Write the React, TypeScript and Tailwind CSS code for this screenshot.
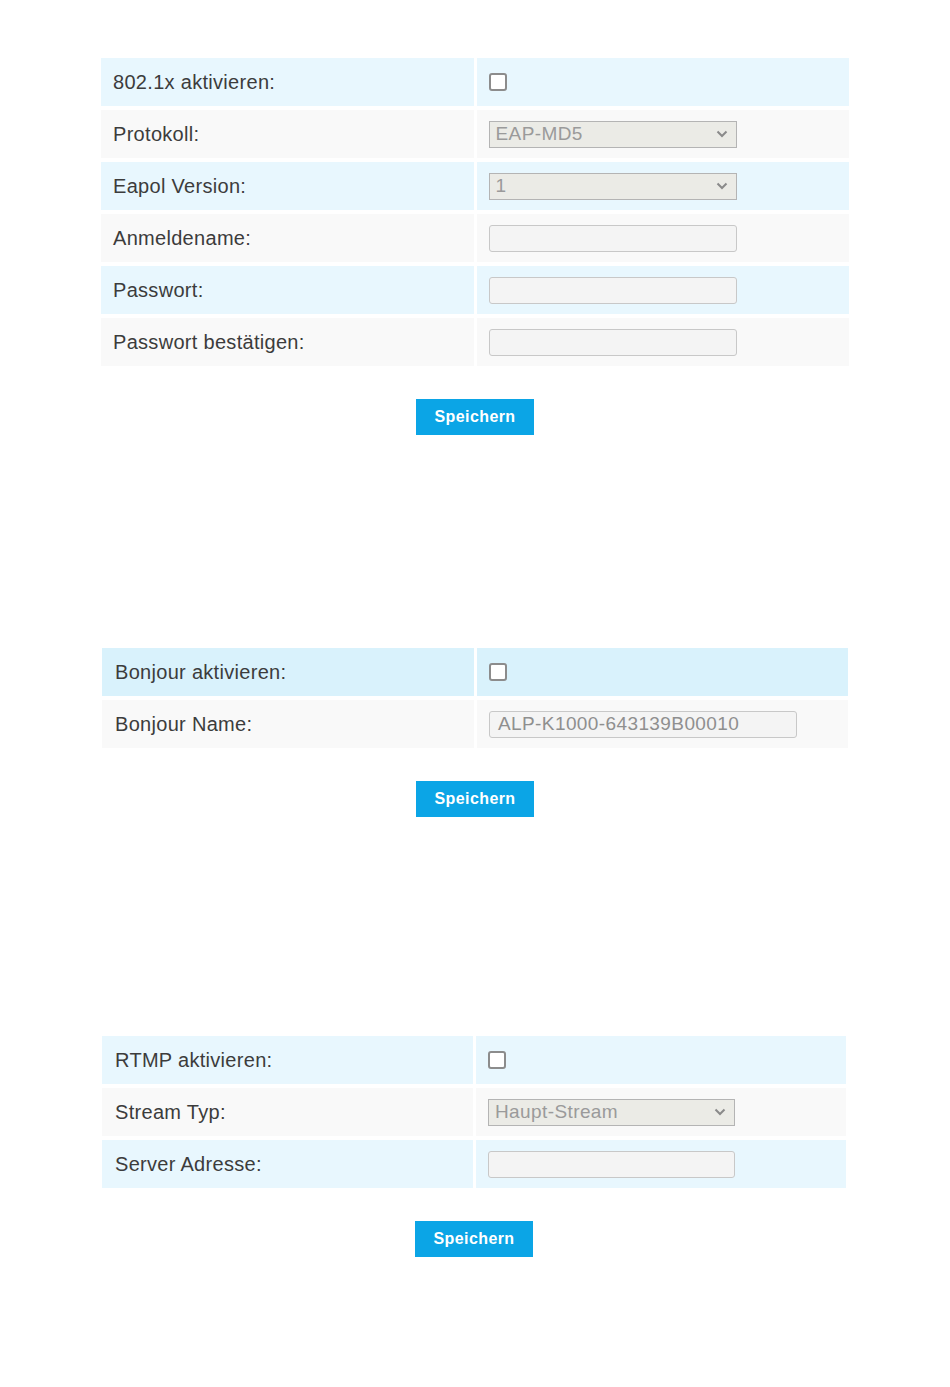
import React from "react";

type Field =
  | { kind: "check" }
  | { kind: "select"; value: string; width: number }
  | { kind: "input"; value?: string; width: number };

type Row = { label: string; field: Field };

const font = { fontFamily: '"Liberation Sans", Arial, sans-serif' };

function Chevron() {
  return (
    <svg width="12" height="8" viewBox="0 0 12 8" className="shrink-0">
      <path d="M1.5 1.5 L6 6 L10.5 1.5" fill="none" stroke="#8a8a8a" strokeWidth="2" />
    </svg>
  );
}

function FieldView({ field }: { field: Field }) {
  if (field.kind === "check") {
    return <div className="w-[18px] h-[18px] rounded-[3px] border-2 border-[#8c8c8c] bg-white" />;
  }
  if (field.kind === "select") {
    return (
      <div
        className="h-[27px] flex items-center justify-between pl-[6px] pr-[8px] border border-[#b4b4b4] bg-[#ebebe6] text-[#9a9a9a] text-[19px] tracking-[0.4px]"
        style={{ width: field.width }}
      >
        <span>{field.value}</span>
        <Chevron />
      </div>
    );
  }
  return (
    <div
      className="h-[27px] flex items-center px-[8px] border border-[#c8c8c8] rounded-[3px] bg-[#f4f4f4] text-[#8f8f8f] text-[19px] tracking-[0.4px]"
      style={{ width: field.width }}
    >
      {field.value}
    </div>
  );
}

function Section({ rows, blue, labelPad, top, box }: { rows: Row[]; blue: string; labelPad: string; top: string; box: string }) {
  return (
    <div className={`${top} ${box}`}>
      <div className="flex flex-col gap-[4px]">
        {rows.map((r, i) => (
          <div key={i} className="flex gap-[3px] h-[48px]">
            <div
              className={`flex-1 flex items-center ${labelPad} text-[20px] tracking-[0.3px] text-[#3c3c3c]`}
              style={{ background: i % 2 === 0 ? blue : "#f9f9f9" }}
            >
              {r.label}
            </div>
            <div
              className="flex-1 flex items-center pl-[12px]"
              style={{ background: i % 2 === 0 ? blue : "#f9f9f9" }}
            >
              <FieldView field={r.field} />
            </div>
          </div>
        ))}
      </div>
      <div className="flex justify-center mt-[33px]">
        <button className="w-[118px] h-[36px] bg-[#0ba5e6] text-white text-[16px] font-semibold tracking-[0.4px]">Speichern</button>
      </div>
    </div>
  );
}

export default function App() {
  return (
    <div className="bg-white w-[950px] h-[1387px] overflow-hidden" style={font}>
      <Section
        top="pt-[58px]"
        box="ml-[101px] w-[748px]"
        labelPad="pl-[12px]"
        blue="#e8f7fe"
        rows={[
          { label: "802.1x aktivieren:", field: { kind: "check" } },
          { label: "Protokoll:", field: { kind: "select", value: "EAP-MD5", width: 248 } },
          { label: "Eapol Version:", field: { kind: "select", value: "1", width: 248 } },
          { label: "Anmeldename:", field: { kind: "input", width: 248 } },
          { label: "Passwort:", field: { kind: "input", width: 248 } },
          { label: "Passwort bestätigen:", field: { kind: "input", width: 248 } },
        ]}
      />
      <Section
        top="pt-[213px]"
        box="ml-[102px] w-[746px]"
        labelPad="pl-[13px]"
        blue="#d9f2fc"
        rows={[
          { label: "Bonjour aktivieren:", field: { kind: "check" } },
          { label: "Bonjour Name:", field: { kind: "input", value: "ALP-K1000-643139B00010", width: 308 } },
        ]}
      />
      <Section
        top="pt-[219px]"
        box="ml-[102px] w-[744px]"
        labelPad="pl-[13px]"
        blue="#e8f7fe"
        rows={[
          { label: "RTMP aktivieren:", field: { kind: "check" } },
          { label: "Stream Typ:", field: { kind: "select", value: "Haupt-Stream", width: 247 } },
          { label: "Server Adresse:", field: { kind: "input", width: 247 } },
        ]}
      />
    </div>
  );
}
